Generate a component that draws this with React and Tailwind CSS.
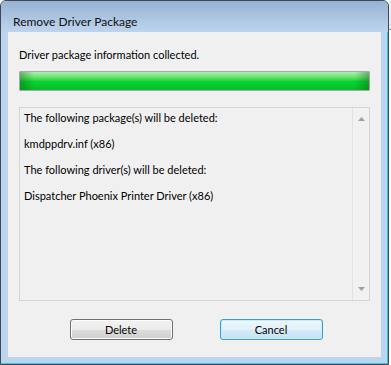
import React from "react";

const Arrow = ({ up }) => (
  <svg width="7" height="4" viewBox="0 0 7 4" className="block">
    {up ? (
      <path d="M3.5 0 L7 4 L0 4 Z" fill="#a0a0a0" />
    ) : (
      <path d="M0 0 L7 0 L3.5 4 Z" fill="#a0a0a0" />
    )}
  </svg>
);

const lines = [
  "The following package(s) will be deleted:",
  "kmdppdrv.inf (x86)",
  "The following driver(s) will be deleted:",
  "Dispatcher Phoenix Printer Driver (x86)",
];

export default function App() {
  return (
    <div className="flex w-[391px] h-[365px] bg-white font-['Segoe_UI',Lato,sans-serif] text-[11px] text-black">
      {/* window */}
      <div className="flex flex-col w-[389px] h-[365px] rounded-t-[6px] border border-[#3e4856] bg-[#bcd4ed] shadow-[inset_-1px_-1px_0_#3cc6dc]">
        <div className="h-[31px] pt-[13px] px-[12px] leading-[15px] text-[12px] rounded-t-[5px] bg-linear-to-b from-[#97b3d1] to-[#bdd4ee] text-[#111]">
          Remove Driver Package
        </div>
        <div className="flex flex-col flex-1 mx-[7px] mb-[7px] px-[11px] pt-[15px] bg-[#f0f0f0]">
          <div className="h-[15px] leading-[15px]">Driver package information collected.</div>

          {/* progress */}
          <div className="mt-[9px] h-[20px] border border-[#aaa6ad] rounded-[1px] bg-linear-to-b from-[#a8f2ae] via-[#0ad432] to-[#05bd28]">
            <div className="h-full bg-[linear-gradient(to_right,rgba(0,70,10,0.35),transparent_14px,transparent_calc(100%-14px),rgba(0,70,10,0.35))]" />
          </div>

          {/* list box */}
          <div className="flex mt-[16px] h-[194px] border border-[#d5d5d5] bg-[#f0f0f0]">
            <div className="flex-1 pl-[4px] pt-[3px] leading-[13px]">
              {lines.map((t, i) => (
                <div key={i} className="mb-[13px]">{t}</div>
              ))}
            </div>
            <div className="flex flex-col items-center justify-between w-[17px] py-[9px] border-l border-[#e3e3e3] bg-[#f1f1f1]">
              <Arrow up />
              <Arrow />
            </div>
          </div>

          {/* buttons */}
          <div className="flex justify-center gap-[47px] pl-[3px] mt-[18px]">
            <button className="w-[103px] h-[21px] rounded-[3px] border border-[#707070] bg-[linear-gradient(#f2f2f2,#ebebeb_50%,#dddddd_50%,#cfcfcf)] shadow-[inset_0_0_0_1px_#fcfcfc] leading-[19px]">
              Delete
            </button>
            <button className="w-[103px] h-[21px] rounded-[3px] border border-[#3c9ad0] bg-[linear-gradient(#eef7fd,#e2f1fb_50%,#d4ebf9_50%,#c4e3f6)] shadow-[inset_0_0_0_1px_#c8ecfb] leading-[19px]">
              Cancel
            </button>
          </div>
        </div>
      </div>
      {/* background behind window */}
      <div className="flex flex-col flex-1">
        <div className="h-[29px] bg-[#eeeeee]" />
        <div className="h-[1px] bg-[#8a8a8a]" />
        <div className="flex-1 bg-white" />
      </div>
    </div>
  );
}
